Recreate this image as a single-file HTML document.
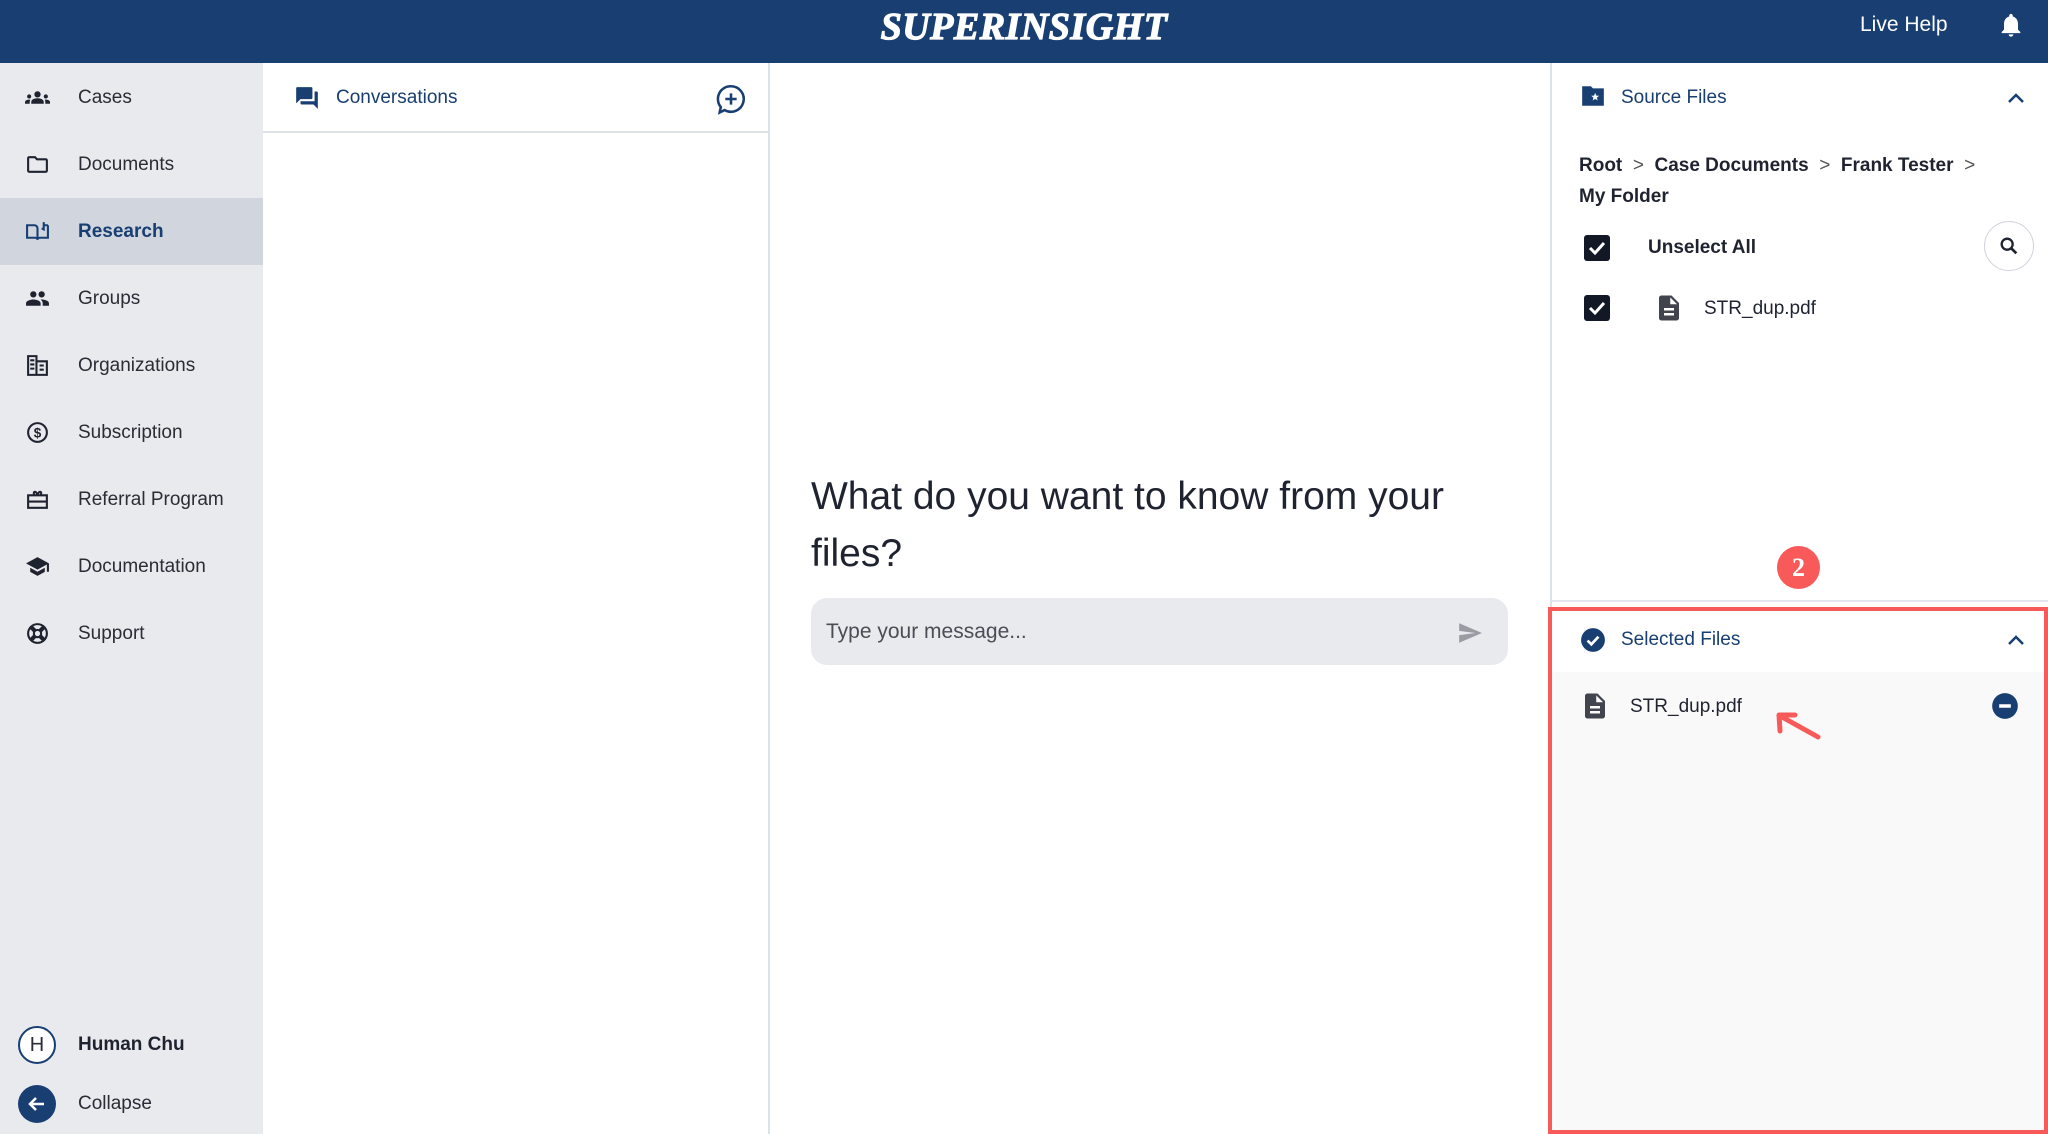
<!DOCTYPE html>
<html><head><meta charset="utf-8"><style>
*{box-sizing:border-box;margin:0;padding:0}
body{width:2048px;height:1134px;overflow:hidden;font-family:"Liberation Sans",sans-serif;background:#fff;position:relative;color:#1f2330}
.abs{position:absolute}
.hdr{left:0;top:0;width:2048px;height:63px;background:#183e72}
.logo{left:0;width:2048px;top:5px;text-align:center;color:#fff;font-family:"Liberation Serif",serif;font-weight:bold;font-style:italic;font-size:38px;letter-spacing:0.5px;-webkit-text-stroke:1.2px #fff}
.side{left:0;top:63px;width:263px;height:1071px;background:#e9eaee}
.nav{left:0;width:263px;height:67px;display:flex;align-items:center;font-size:19px;color:#2a2d35}
.nav svg{position:absolute;left:25px;width:25px;height:25px}
.nav span{position:absolute;left:78px}
.sel{background:#d0d5de;color:#183e72;font-weight:bold}
.t{font-size:19px}
</style></head><body>
<div class="abs hdr"></div>
<div class="abs logo">SUPERINSIGHT</div>
<div class="abs" style="left:1860px;top:13px;color:#fff;font-size:21px">Live Help</div>
<svg class="abs" style="left:1997px;top:10px" width="28" height="30" viewBox="0 0 24 24"><path fill="#fff" d="M12 22c1.1 0 2-.9 2-2h-4c0 1.1.9 2 2 2zm6-6v-5c0-3.070-1.63-5.64-4.5-6.32V4c0-.83-.67-1.5-1.5-1.5s-1.5.67-1.5 1.5v.68C7.64 5.36 6 7.92 6 11v5l-2 2v1h16v-1l-2-2z"/></svg>

<div class="abs side"></div>
<div class="abs nav" style="top:64px"><svg viewBox="0 0 24 24"><path fill="#1f2330" d="M12 12.75c1.63 0 3.07.39 4.24.9 1.08.48 1.76 1.56 1.76 2.73V18H6v-1.61c0-1.18.68-2.260 1.76-2.73 1.17-.52 2.61-.91 4.24-.91zM4 13c1.1 0 2-.9 2-2s-.9-2-2-2-2 .9-2 2 .9 2 2 2zm1.13 1.1C4.76 14.04 4.39 14 4 14c-.99 0-1.93.21-2.78.58A2 2 0 0 0 0 16.43V18h4.5v-1.61c0-.83.23-1.61.63-2.29zM20 13c1.1 0 2-.9 2-2s-.9-2-2-2-2 .9-2 2 .9 2 2 2zm4 3.43c0-.81-.48-1.53-1.22-1.85A6.95 6.95 0 0 0 20 14c-.39 0-.76.04-1.13.1.4.68.63 1.46.63 2.29V18H24v-1.57zM12 6c1.66 0 3 1.34 3 3s-1.34 3-3 3-3-1.34-3-3 1.34-3 3-3z"/></svg><span>Cases</span></div>
<div class="abs nav" style="top:131px"><svg viewBox="0 0 24 24"><path fill="#1f2330" d="M9.17 6l2 2H20v10H4V6h5.17M10 4H4c-1.1 0-2 .9-2 2v12c0 1.1.9 2 2 2h16c1.1 0 2-.9 2-2V8c0-1.1-.9-2-2-2h-8l-2-2z"/></svg><span>Documents</span></div>
<div class="abs nav sel" style="top:198px"><svg viewBox="0 0 24 24"><path fill="none" stroke="#183e72" stroke-width="2" d="M2 6h7a3 3 0 0 1 3 3v11a2 2 0 0 0-2-2H2zM22 6h-4M12 9v11a2 2 0 0 1 2-2h8V6M18 3v7l-2-1"/></svg><span>Research</span></div>
<div class="abs nav" style="top:265px"><svg viewBox="0 0 24 24"><path fill="#1f2330" d="M16 11c1.66 0 2.99-1.34 2.99-3S17.66 5 16 5c-1.66 0-3 1.34-3 3s1.34 3 3 3zm-8 0c1.66 0 2.99-1.34 2.99-3S9.66 5 8 5C6.34 5 5 6.34 5 8s1.34 3 3 3zm0 2c-2.33 0-7 1.17-7 3.5V19h14v-2.5c0-2.33-4.67-3.5-7-3.5zm8 0c-.29 0-.62.02-.97.05 1.16.84 1.97 1.97 1.97 3.45V19h6v-2.5c0-2.33-4.67-3.5-7-3.5z"/></svg><span>Groups</span></div>
<div class="abs nav" style="top:332px"><svg viewBox="0 0 24 24"><path fill="none" stroke="#1f2330" stroke-width="2" d="M3 3h8v18H3zM11 8h10v13H11M5 7h4M5 11h4M5 15h4M14 12h4M14 16h4"/></svg><span>Organizations</span></div>
<div class="abs nav" style="top:399px"><svg viewBox="0 0 24 24"><circle cx="12" cy="12" r="9" fill="none" stroke="#1f2330" stroke-width="2"/><text x="12" y="17" font-size="13" text-anchor="middle" font-family="Liberation Sans" font-weight="bold" fill="#1f2330">$</text></svg><span>Subscription</span></div>
<div class="abs nav" style="top:466px"><svg viewBox="0 0 24 24"><path fill="none" stroke="#1f2330" stroke-width="2" d="M3 8h18v12H3zM3 14h18M9 8c-2-4 2-5 3 0 1-5 5-4 3 0"/></svg><span>Referral Program</span></div>
<div class="abs nav" style="top:533px"><svg viewBox="0 0 24 24"><path fill="#1f2330" d="M5 13.18v4L12 21l7-3.82v-4L12 17l-7-3.82zM12 3L1 9l11 6 9-4.91V17h2V9L12 3z"/></svg><span>Documentation</span></div>
<div class="abs nav" style="top:600px"><svg viewBox="0 0 24 24"><circle cx="12" cy="12" r="9" fill="none" stroke="#1f2330" stroke-width="2"/><circle cx="12" cy="12" r="3.5" fill="none" stroke="#1f2330" stroke-width="2"/><path stroke="#1f2330" stroke-width="4" d="M6 6l3.5 3.5M18 6l-3.5 3.5M6 18l3.5-3.5M18 18l-3.5-3.5"/></svg><span>Support</span></div>
<div class="abs" style="left:18px;top:1026px;width:38px;height:38px;border:2px solid #183e72;border-radius:50%;background:#fff;text-align:center;line-height:34px;font-size:20px;color:#2a2d35">H</div>
<div class="abs t" style="left:78px;top:1034px;font-weight:bold">Human Chu</div>
<div class="abs" style="left:18px;top:1085px;width:38px;height:38px;border-radius:50%;background:#183e72"><svg width="38" height="38" viewBox="0 0 38 38"><path d="M26 19H12M18 13l-6 6 6 6" fill="none" stroke="#fff" stroke-width="2.5"/></svg></div>
<div class="abs t" style="left:78px;top:1093px;color:#2a2d35">Collapse</div>

<div class="abs" style="left:263px;top:131px;width:506px;height:2px;background:#dde1e8"></div>
<div class="abs" style="left:768px;top:63px;width:2px;height:1071px;background:#dde1e8"></div>
<svg class="abs" style="left:294px;top:85px" width="26" height="26" viewBox="0 0 24 24"><path fill="#183e72" d="M21 6h-2v9H6v2c0 .55.45 1 1 1h11l4 4V7c0-.55-.45-1-1-1zm-4 6V3c0-.55-.45-1-1-1H3c-.55 0-1 .45-1 1v14l4-4h10c.55 0 1-.45 1-1z"/></svg>
<div class="abs t" style="left:336px;top:87px;color:#183e72">Conversations</div>
<svg class="abs" style="left:714px;top:82px" width="34" height="34" viewBox="0 0 24 24"><path fill="none" stroke="#183e72" stroke-width="1.8" d="M12 3a9 9 0 1 1-4.5 16.8L4 21.5l.8-3.8A9 9 0 0 1 12 3zM12 8v8M8 12h8"/></svg>

<div class="abs" style="left:811px;top:468px;font-size:39px;line-height:57px;color:#1f2330;width:700px">What do you want to know from your<br>files?</div>
<div class="abs" style="left:811px;top:598px;width:697px;height:67px;background:#e9eaee;border-radius:16px"></div>
<div class="abs" style="left:826px;top:620px;font-size:21px;color:#4a4d55">Type your message...</div>
<svg class="abs" style="left:1456px;top:620px" width="28" height="26" viewBox="0 0 24 24"><path fill="#9a9ca3" d="M2.01 21L23 12 2.01 3 2 10l15 2-15 2z"/></svg>

<div class="abs" style="left:1550px;top:63px;width:2px;height:545px;background:#dde1e8"></div>
<svg class="abs" style="left:1580px;top:84px" width="26" height="24" viewBox="0 0 24 22"><path fill="#183e72" d="M2 2h8l2 2h10v16H2z"/><path fill="#fff" d="M14 8l1 2.6 2.7.2-2.1 1.7.7 2.7-2.3-1.5-2.3 1.5.7-2.7-2.1-1.7 2.7-.2z"/></svg>
<div class="abs t" style="left:1621px;top:87px;color:#183e72">Source Files</div>
<svg class="abs" style="left:2004px;top:88px" width="24" height="20" viewBox="0 0 24 20"><path d="M5 14l7-7 7 7" fill="none" stroke="#183e72" stroke-width="2.5"/></svg>
<div class="abs" style="left:1579px;top:150px;font-size:19px;font-weight:bold;line-height:31px;color:#1f2330;width:460px">Root <span style="color:#555;font-weight:normal">&nbsp;&gt;&nbsp;</span> Case Documents <span style="color:#555;font-weight:normal">&nbsp;&gt;&nbsp;</span> Frank Tester <span style="color:#555;font-weight:normal">&nbsp;&gt;</span><br>My Folder</div>
<div class="abs" style="left:1584px;top:235px;width:26px;height:26px;background:#121826;border-radius:3px"><svg width="26" height="26" viewBox="0 0 26 26"><path d="M6 13l5 5 9-10" fill="none" stroke="#fff" stroke-width="3"/></svg></div>
<div class="abs t" style="left:1648px;top:237px;font-weight:bold">Unselect All</div>
<div class="abs" style="left:1984px;top:221px;width:50px;height:50px;border:1.5px solid #cfd3da;border-radius:50%;background:#fff"><svg style="margin:13px" width="22" height="22" viewBox="0 0 24 24"><circle cx="10" cy="10" r="6" fill="none" stroke="#1f2330" stroke-width="2.5"/><path d="M14.5 14.5L20 20" stroke="#1f2330" stroke-width="3"/></svg></div>
<div class="abs" style="left:1584px;top:295px;width:26px;height:26px;background:#121826;border-radius:3px"><svg width="26" height="26" viewBox="0 0 26 26"><path d="M6 13l5 5 9-10" fill="none" stroke="#fff" stroke-width="3"/></svg></div>
<svg class="abs" style="left:1654px;top:293px" width="30" height="30" viewBox="0 0 24 24"><path fill="#41444c" d="M14 2H6c-1.1 0-2 .9-2 2v16c0 1.1.9 2 2 2h12c1.1 0 2-.9 2-2V8l-6-6zm2 16H8v-2h8v2zm0-4H8v-2h8v2zm-3-5V3.5L18.5 9H13z"/></svg>
<div class="abs t" style="left:1704px;top:298px">STR_dup.pdf</div>

<div class="abs" style="left:1552px;top:600px;width:496px;height:2px;background:#e3e6ec"></div>
<div class="abs" style="left:1777px;top:546px;width:43px;height:43px;border-radius:50%;background:#f85a5a;color:#fff;text-align:center;line-height:43px;font-family:'Liberation Serif',serif;font-weight:bold;font-size:26px">2</div>
<div class="abs" style="left:1552px;top:672px;width:492px;height:462px;background:#f9f9f9"></div>
<div class="abs" style="left:1548px;top:607px;width:500px;height:527px;border:4px solid #f85a5a"></div>
<svg class="abs" style="left:1580px;top:627px" width="26" height="26" viewBox="0 0 24 24"><circle cx="12" cy="12" r="11" fill="#183e72"/><path d="M7 12.5l3.5 3.5 6.5-7" fill="none" stroke="#fff" stroke-width="2.5"/></svg>
<div class="abs t" style="left:1621px;top:629px;color:#183e72">Selected Files</div>
<svg class="abs" style="left:2004px;top:630px" width="24" height="20" viewBox="0 0 24 20"><path d="M5 14l7-7 7 7" fill="none" stroke="#183e72" stroke-width="2.5"/></svg>
<svg class="abs" style="left:1580px;top:691px" width="30" height="30" viewBox="0 0 24 24"><path fill="#41444c" d="M14 2H6c-1.1 0-2 .9-2 2v16c0 1.1.9 2 2 2h12c1.1 0 2-.9 2-2V8l-6-6zm2 16H8v-2h8v2zm0-4H8v-2h8v2zm-3-5V3.5L18.5 9H13z"/></svg>
<div class="abs t" style="left:1630px;top:696px">STR_dup.pdf</div>
<svg class="abs" style="left:1991px;top:692px" width="28" height="28" viewBox="0 0 24 24"><circle cx="12" cy="12" r="11" fill="#183e72"/><path d="M7 12h10" stroke="#fff" stroke-width="3"/></svg>
<svg class="abs" style="left:1770px;top:705px" width="55" height="40" viewBox="0 0 55 40"><path d="M48 32L12 12M10 26L9 10l16 0" fill="none" stroke="#f85a5a" stroke-width="5" stroke-linecap="round" stroke-linejoin="round"/></svg>
</body></html>
